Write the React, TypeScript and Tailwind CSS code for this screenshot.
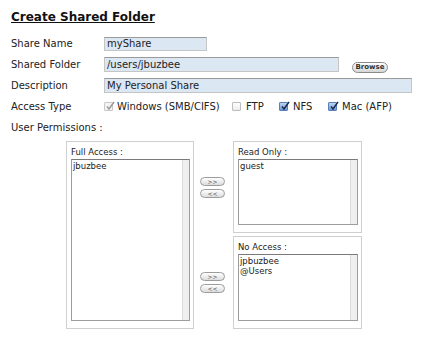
import React from 'react';

const font = { fontFamily: '"DejaVu Sans", Verdana, sans-serif' };

function Check({ state }: { state: 'disabled' | 'off' | 'on' }) {
    if (state === 'off') {
        return <span className="inline-block w-[9px] h-[9px] border border-[#bdbdbd] bg-gradient-to-b from-white to-[#ececec] rounded-[1px]" />;
    }
    const on = state === 'on';
    return (
        <span
            className={
                on
                    ? 'relative inline-block w-[9px] h-[9px] border border-[#5a7fb8] bg-gradient-to-b from-[#bcd4f2] to-[#6f9ad8] rounded-[1px]'
                    : 'relative inline-block w-[9px] h-[9px] border border-[#c8c8c8] bg-[#f4f4f4] rounded-[1px]'
            }
        >
            <svg viewBox="0 0 10 10" className="absolute left-[0px] top-[-2px] w-[10px] h-[10px]">
                <path d="M2 5.5 L4 8 L9 1" fill="none" stroke={on ? '#1d2c4a' : '#9a9a9a'} strokeWidth="1.5" />
            </svg>
        </span>
    );
}

function ArrowButton({ label }: { label: string }) {
    return (
        <button className="w-[25px] h-[9px] rounded-full border border-[#9c9c9c] bg-gradient-to-b from-white to-[#dcdcdc] text-[6px] leading-[7px] text-[#444] flex items-center justify-center">
            {label}
        </button>
    );
}

function ListBox({ title, items, className }: { title: string; items: string[]; className: string }) {
    return (
        <div className={`border border-[#cfcfcf] flex flex-col pt-[5px] pb-[7px] pl-[4px] pr-[3px] ${className}`}>
            <div className="text-[8.5px] leading-[11px] text-[#222] mb-[1px]">{title}</div>
            <div className="flex-1 flex border border-[#9d9d9d] border-t-[#7a7a7a]">
                <div className="flex-1 text-[8.5px] leading-[10px] text-[#222] pl-[1px] pt-[1px]">
                    {items.map((it) => (
                        <div key={it}>{it}</div>
                    ))}
                </div>
                <div className="w-[7px] bg-[#efefef] border-l border-[#dadada]" />
            </div>
        </div>
    );
}

export default function App() {
    return (
        <div className="w-[424px] h-[339px] bg-white pl-[11px] pt-[9px]" style={font}>
            <h1 className="text-[12px] leading-[16px] font-bold underline text-[#111] mb-[8px]">Create Shared Folder</h1>

            <div className="grid grid-cols-[93px_1fr] auto-rows-[21px] text-[10px] text-[#222] items-center">
                <div>Share Name</div>
                <div className="w-[103px] h-[14px] bg-[#dce7f4] border border-[#c5c5c5] border-t-[#9a9a9a] px-[2px] leading-[12px]">myShare</div>

                <div>Shared Folder</div>
                <div className="flex items-end">
                    <div className="w-[235px] h-[15px] bg-[#dce7f4] border border-[#c5c5c5] border-t-[#9a9a9a] px-[2px] leading-[13px]">/users/jbuzbee</div>
                    <button className="ml-[13px] mb-[-1px] w-[36px] h-[11px] rounded-full border border-[#8a8a8a] bg-gradient-to-b from-white to-[#d6d6d6] text-[7px] leading-[9px] font-bold text-[#333] flex items-center justify-center">
                        Browse
                    </button>
                </div>

                <div>Description</div>
                <div className="w-[308px] h-[15px] bg-[#dce7f4] border border-[#c5c5c5] border-t-[#9a9a9a] px-[2px] leading-[13px]">My Personal Share</div>

                <div>Access Type</div>
                <div className="flex items-center h-[15px]">
                    <div className="w-[128px] flex items-center">
                        <Check state="disabled" />
                        <span className="ml-[4px]">Windows (SMB/CIFS)</span>
                    </div>
                    <div className="w-[47px] flex items-center">
                        <Check state="off" />
                        <span className="ml-[5px]">FTP</span>
                    </div>
                    <div className="w-[49px] flex items-center">
                        <Check state="on" />
                        <span className="ml-[5px]">NFS</span>
                    </div>
                    <div className="flex items-center">
                        <Check state="on" />
                        <span className="ml-[5px]">Mac (AFP)</span>
                    </div>
                </div>

                <div className="col-span-2">User Permissions :</div>
            </div>

            <div className="flex ml-[55px] mt-[3px]">
                <ListBox title="Full Access :" items={['jbuzbee']} className="w-[128px] h-[188px]" />
                <div className="w-[39px] flex flex-col gap-[3px] pl-[6px]">
                    <div className="flex-1 flex flex-col justify-center gap-[3px]">
                        <ArrowButton label=">>" />
                        <ArrowButton label="<<" />
                    </div>
                    <div className="flex-1 flex flex-col justify-center gap-[3px]">
                        <ArrowButton label=">>" />
                        <ArrowButton label="<<" />
                    </div>
                </div>
                <div className="flex flex-col gap-[3px]">
                    <ListBox title="Read Only :" items={['guest']} className="w-[129px] h-[92px]" />
                    <ListBox title="No Access :" items={['jpbuzbee', '@Users']} className="w-[129px] h-[93px]" />
                </div>
            </div>
        </div>
    );
}
